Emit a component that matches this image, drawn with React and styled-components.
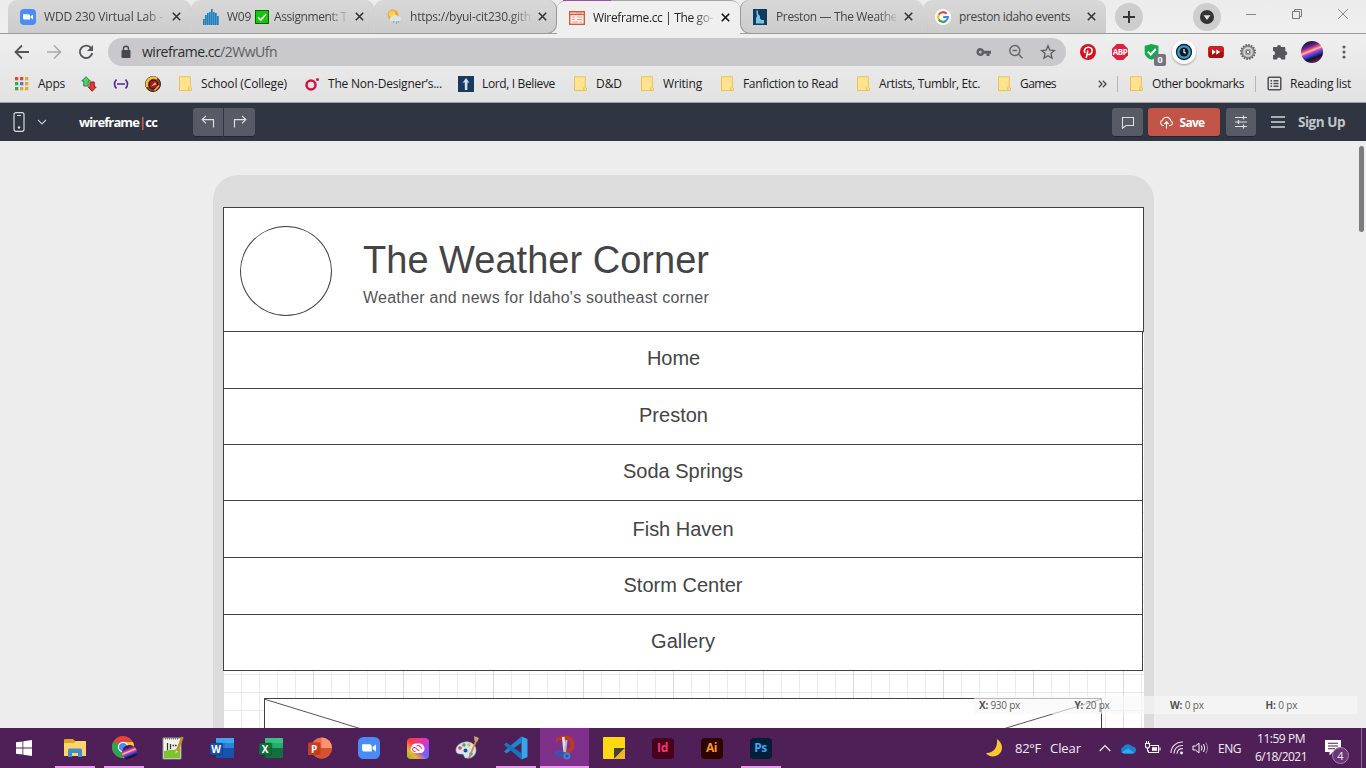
import React, { useLayoutEffect, useRef, useState } from "react";
import styled, { createGlobalStyle, css } from "styled-components";

const UI = `"Open Sans", "Noto Sans", sans-serif`;

const Global = createGlobalStyle`
  * { box-sizing: border-box; }
  body { margin: 0; overflow: hidden; font-family: ${UI}; }
  svg { display: block; flex: none; }
`;

const Screen = styled.div`
  width: 1366px;
  height: 768px;
  display: flex;
  flex-direction: column;
  overflow: hidden;
`;

/* Text tracked so that it fills a given width */
const Tracked = styled.span`
  display: inline-block;
  white-space: pre;
  flex: none;
  justify-self: start;
`;
function Fit({ w, children }) {
  const ref = useRef(null);
  const [spacing, setSpacing] = useState(0);
  useLayoutEffect(() => {
    const el = ref.current;
    const n = el.textContent.length;
    setSpacing((w - el.getBoundingClientRect().width) / n);
  }, [w]);
  return (
    <Tracked ref={ref} style={{ letterSpacing: spacing + "px" }}>
      {children}
    </Tracked>
  );
}

/* ---------- tab strip ---------- */
const TabStrip = styled.div`
  height: 34px;
  flex: none;
  display: flex;
  padding-left: 8px;
  background: linear-gradient(#ececec, #efefef);
  box-shadow: inset 0 -1px #9c9c9c;
`;
const Tab = styled.div`
  flex: 0 0 183px;
  height: ${(p) => (p.$active ? 34 : 33)}px;
  display: flex;
  align-items: center;
  padding-left: 12px;
  position: relative;
  font-size: 12px;
  color: ${(p) => (p.$active ? "#222" : "#444")};
  border-radius: 9px 9px 0 0;
  background: linear-gradient(#d8d8d8, #cccccc);
  ${(p) => p.$divider && css`box-shadow: inset -1px 0 #d2d2d2;
    &::after { content: ""; position: absolute; right: -1px; top: 8px; width: 1px; height: 19px; background: #777; }`}
  ${(p) => p.$side === "before" && css`border-radius: 9px 9px 10px 0; border-right: 1px solid #999; border-bottom: 1px solid #999; height: 34px;`}
  ${(p) => p.$side === "after" && css`border-radius: 9px 9px 0 10px; border-left: 1px solid #999; border-bottom: 1px solid #999; height: 34px; padding-left: 11px;`}
  ${(p) => p.$active && css`background: #efefef; border-top: 1px solid #a5a5a5; border-radius: 9px 9px 0 0;
    &::before { content: ""; position: absolute; left: 6px; top: -1px; width: 48px; height: 1px; background: #9a4fa0; }`}
`;
const TabIcon = styled.div`
  flex: 0 0 24px;
  display: flex;
`;
const TabText = styled.div`
  flex: 0 0 120px;
  overflow: hidden;
  white-space: nowrap;
  line-height: 20px;
  ${(p) => p.$fade && css`mask-image: linear-gradient(90deg, #000 84%, transparent 103%);`}
`;
const TabClose = styled.div`
  flex: 0 0 24px;
  display: flex;
  justify-content: center;
`;
const RoundButton = styled.div`
  width: 28px;
  height: 28px;
  margin: 3px 0 0 ${(p) => p.$gap}px;
  border-radius: 50%;
  background: #cdcdcd;
  display: flex;
  align-items: center;
  justify-content: center;
`;
const WindowButtons = styled.div`
  display: flex;
  gap: 34px;
  margin: 8px 0 0 24px;
  height: 12px;
`;

/* ---------- toolbar ---------- */
const Toolbar = styled.div`
  height: 36px;
  flex: none;
  display: flex;
  align-items: center;
  padding-left: 6px;
  background: linear-gradient(#efefef, #e8e8e8);
`;
const Slot = styled.div`
  position: relative;
  flex: 0 0 32px;
  height: 32px;
  display: flex;
  align-items: center;
  justify-content: center;
`;
const Omnibox = styled.div`
  flex: 0 0 958px;
  height: 28px;
  margin: 0 6px 0 6px;
  border-radius: 14px;
  background: #c9c9cb;
  display: flex;
  align-items: center;
  padding: 0 2px 0 12px;
  font-size: 14px;
  color: #5c5d60;
  b { font-weight: 400; color: #2b2c2e; }
`;
const Address = styled.div`
  flex: 1;
  padding-left: 10px;
  line-height: 20px;
`;
const CountBadge = styled.div`
  position: absolute;
  left: 18px;
  top: 18px;
  width: 12px;
  height: 12px;
  border-radius: 2px;
  background: #74727f;
  color: #fff;
  font: 700 9px/12px ${UI};
  text-align: center;
`;
const WhiteDisc = styled.div`
  width: 24px;
  height: 24px;
  border-radius: 50%;
  background: #fff;
  box-shadow: 0 1px 2px #0005;
  display: flex;
  align-items: center;
  justify-content: center;
`;
const Avatar = styled.div`
  width: ${(p) => p.$size}px;
  height: ${(p) => p.$size}px;
  border-radius: 50%;
  background: linear-gradient(158deg, #2a1838 0 16%, #5a1ea0 28%, #e04a6a 38%, #ffc9a0 45%, #d838c8 51%, #3048d8 60%, #12102c 72%, #7a2058 88%, #c03070 100%);
`;

/* ---------- bookmarks ---------- */
const Bookmarks = styled.div`
  height: 33px;
  flex: none;
  display: flex;
  align-items: center;
  padding: 0 0 5px 14px;
  background: linear-gradient(#e8e8e8, #e2e2e2);
  border-bottom: 1px solid #a2a2a4;
  font-size: 12px;
  color: #1c1c1c;
`;
const Bookmark = styled.div`
  flex: 0 0 ${(p) => p.$w}px;
  display: flex;
  align-items: center;
  gap: 8px;
`;
const BookmarkIcon = styled.div`
  width: 16px;
  height: 16px;
  display: flex;
  align-items: center;
  justify-content: center;
`;
const Divider = styled.div`
  width: 1px;
  height: 16px;
  background: #b5b5b5;
  margin: 0 10px;
`;
const More = styled.div`
  flex: 0 0 51px;
  display: flex;
  justify-content: flex-end;
`;

/* ---------- editor bar ---------- */
const EditorBar = styled.div`
  height: 38px;
  flex: none;
  display: flex;
  align-items: center;
  background: #2f3541;
  color: #d3d6da;
  padding-left: 13px;
`;
const Brand = styled.div`
  flex: 0 0 114px;
  font-size: 13px;
  font-weight: 700;
  color: #fff;
  i { font-style: normal; color: #d85c4c; }
`;
const BarButton = styled.div`
  width: ${(p) => p.$w || 30}px;
  height: 28px;
  margin-left: ${(p) => p.$gap || 0}px;
  padding-right: ${(p) => (p.$primary ? 5 : 0)}px;
  border-radius: ${(p) => p.$radius || "3px"};
  background: ${(p) => (p.$primary ? "#c25548" : "#565b65")};
  box-shadow: 0 1px #23272f;
  display: flex;
  align-items: center;
  justify-content: center;
  gap: 6px;
  color: ${(p) => (p.$primary ? "#fff" : "#dddfe2")};
  font-size: 12px;
  font-weight: 700;
`;
const BarSpace = styled.div`
  width: ${(p) => p.$w}px;
`;
const SignUp = styled.div`
  padding-left: 13px;
  font-size: 13.5px;
  font-weight: 700;
  color: #c2c5c9;
`;

/* ---------- canvas ---------- */
const Canvas = styled.div`
  position: relative;
  height: 587px;
  flex: none;
  background: #ededed;
  padding: 34px 0 0 213px;
  overflow: hidden;
`;
const Device = styled.div`
  width: 941px;
  height: 620px;
  background: #dcdcdc;
  border-radius: 25px 25px 0 0;
  padding: 32px 10px 0;
`;
const Sheet = styled.div`
  width: 921px;
  height: 600px;
  background-color: #fff;
  background-image:
    linear-gradient(90deg, #dadada 1px, transparent 1px),
    linear-gradient(90deg, #ebebeb 1px, transparent 1px),
    linear-gradient(#ebebeb 1px, transparent 1px);
  background-size: 90px 90px, 18px 18px, 18px 18px;
  background-position: 0 0, 0 0, 0 17px;
`;
const SiteHeader = styled.div`
  height: 125px;
  border: 1px solid #414143;
  background: #fff;
  display: flex;
  padding: 18px 0 0 16px;
  font-family: "Liberation Sans", Arial, sans-serif;
  color: #444446;
`;
const Logo = styled.div`
  width: 92px;
  height: 90px;
  border: 1px solid #414143;
  border-radius: 50%;
`;
const Titles = styled.div`
  margin-left: 31px;
  padding-top: 12px;
`;
const Title = styled.div`
  font-size: 38px;
  line-height: 44px;
`;
const Subtitle = styled.div`
  margin-top: 7px;
  font-size: 16px;
  line-height: 18px;
  color: #555557;
`;
const Nav = styled.div`
  width: 920px;
  margin-top: -1px;
  border: solid #414143;
  border-width: 1px 1px 0;
  background: #fff;
  font: 20px "Liberation Sans", Arial, sans-serif;
  color: #444446;
`;
const NavRow = styled.div`
  height: ${(p) => p.$h}px;
  border-bottom: 1px solid #414143;
  display: flex;
  justify-content: center;
  padding-top: ${(p) => p.$pad}px;
  padding-right: ${(p) => p.$inset || 0}px;
  line-height: 22px;
`;
const Picture = styled.div`
  width: 838px;
  height: 60px;
  margin: 27px 0 0 41px;
  background: #fff;
  border: 1px solid #414143;
  svg { margin: 0 -1px; }
`;
const Coordinates = styled.div`
  position: absolute;
  left: 974px;
  top: 555px;
  width: 383px;
  height: 18px;
  padding-left: 5px;
  display: grid;
  grid-template-columns: repeat(4, 95.5px);
  background: #f8f8f8a6;
  font-size: 10px;
  line-height: 18px;
  color: #606060;
  b { color: #505050; }
`;
const Scrollbar = styled.div`
  position: absolute;
  right: 2px;
  top: 5px;
  width: 5px;
  height: 86px;
  border-radius: 3px;
  background: #7a7c80;
`;

/* ---------- taskbar ---------- */
const Taskbar = styled.div`
  height: 40px;
  flex: none;
  display: flex;
  align-items: center;
  background: #4f1f57;
  color: #f3edf4;
  font-size: 12px;
`;
const Start = styled.div`
  flex: 0 0 50px;
  display: flex;
  padding-left: 16px;
`;
const TaskButton = styled.div`
  position: relative;
  flex: 0 0 49px;
  height: 40px;
  display: flex;
  align-items: center;
  justify-content: center;
  ${(p) => p.$active && css`background: #7f308a;`}
  ${(p) => p.$open && css`&::after {
    content: ""; position: absolute; bottom: 0; height: 2px; background: #e79ae9;
    width: ${p.$active ? 49 : 40}px;
  }`}
`;
const Adobe = styled.div`
  width: 22px;
  height: 21px;
  border-radius: 4px;
  background: ${(p) => p.$bg};
  color: ${(p) => p.$fg};
  font: 700 12px/20px ${UI};
  text-align: center;
  letter-spacing: -0.4px;
`;
const Tray = styled.div`
  display: flex;
  align-items: center;
  margin-left: 200px;
`;
const TrayCell = styled.div`
  flex: 0 0 ${(p) => p.$w}px;
  font-size: ${(p) => p.$size || 12}px;
  display: flex;
`;
const Clock = styled.div`
  flex: 0 0 52px;
  display: flex;
  flex-direction: column;
  align-items: center;
  line-height: 18px;
`;
const Notices = styled.div`
  position: relative;
  width: 24px;
  height: 24px;
  margin: 8px 0 0 18px;
`;
const NoticeCount = styled.div`
  position: absolute;
  left: 7px;
  top: 7px;
  width: 17px;
  height: 17px;
  border-radius: 50%;
  border: 1px solid #a982b0;
  background: #6c3677;
  font-size: 11px;
  line-height: 15px;
  text-align: center;
`;
const ShowDesktop = styled.div`
  width: 5px;
  height: 40px;
  margin-left: auto;
  border-left: 1px solid #88698d;
`;

/* ---------- drawings ---------- */
const Svg = ({ s = 16, w, h, box, children, ...rest }) => (
  <svg width={w || s} height={h || s} viewBox={box || `0 0 ${w || s} ${h || s}`} fill="none" {...rest}>
    {children}
  </svg>
);
const ZoomLogo = ({ s = 16 }) => (
  <Svg s={s} box="0 0 16 16">
    <rect width="16" height="16" rx="4" fill="#4a8cf7" />
    <path d="M3 5.3h5.3c1 0 1.7.7 1.7 1.7v3.6H4.7C3.700 10.600 3 9.900 3 8.900z M10.600 7.300l2.500-1.900v5.200l-2.500-1.900z" fill="#fff" />
  </Svg>
);
const Bars = () => (
  <Svg s={16}>
    {[[0, 10], [2, 6], [4, 4], [6, 3], [8, 0], [10, 3], [12, 4], [14, 7]].map(([x, y]) => (
      <rect key={x} x={x} y={y} width="1.700" height={16 - y} fill="#1d7fc0" />
    ))}
  </Svg>
);
const SunCloud = () => (
  <Svg s={16}>
    <circle cx="7" cy="6" r="5.500" fill="#f5a623" />
    <circle cx="6" cy="5" r="3.300" fill="#fcd05a" />
    <path d="M5 12a2.500 2.500 0 0 1 1-4.500 3.500 3.500 0 0 1 6 0 2.500 2.500 0 0 1 2 4.500z" fill="#dde3ea" />
    <path d="M8 12l-1 2M11 12l-1 3M13 12l-1 2" stroke="#8ba5b8" />
  </Svg>
);
const WireIcon = () => (
  <Svg s={16}>
    <rect x=".7" y="1.700" width="14.600" height="12.600" stroke="#d9593a" strokeWidth="1.400" fill="#fdf3ee" />
    <path d="M1 4.500h14" stroke="#d9593a" strokeWidth="1.200" />
    <path d="M2.500 3h1M4.500 3h1M6.500 3h7" stroke="#d9593a" strokeWidth=".8" />
    <path d="M3 7h3M3 9.500h3M3 12h6M8 7h5M8 9.500h5M10.500 12H13" stroke="#eba088" strokeWidth="1.100" />
  </Svg>
);
const Idaho = () => (
  <Svg s={16}>
    <rect x="1" width="14" height="16" fill="#123c5d" />
    <path d="M4.500 1.500H6V5l2 2v2.500l1.500 1.500H12v3.500H4V9l1-2-.5-2z" fill="#72c6e6" />
  </Svg>
);
const GoogleG = () => (
  <Svg s={16}>
    <circle cx="8" cy="8" r="8" fill="#fff" />
    <g strokeWidth="2.100">
      <path d="M11.600 4.700A4.900 4.900 0 0 0 3.700 5.700" stroke="#ea4335" />
      <path d="M3.700 5.700a4.900 4.900 0 0 0 0 4.700" stroke="#fbbc05" />
      <path d="M3.700 10.400a4.900 4.900 0 0 0 7.500 1.200" stroke="#34a853" />
      <path d="M11.200 11.600A4.900 4.900 0 0 0 12.900 8H8.200" stroke="#4285f4" />
    </g>
  </Svg>
);
const Close = ({ c = "#333" }) => (
  <Svg s={9}>
    <path d="M.8.8l7.400 7.400M8.200.8L.8 8.200" stroke={c} strokeWidth="1.600" />
  </Svg>
);
const CheckBox = styled.span`
  display: inline-flex;
  vertical-align: -3px;
  margin: 0 5px 0 4px;
`;
const Folder = () => (
  <Svg w={13} h={15}>
    <path d="M.5.8h10.800v10l1.200 1v2.700H.5z" fill="#ffe38e" stroke="#e8c255" />
    <path d="M9.900 14.200v-2.600l1-1.200" stroke="#e3b83c" />
  </Svg>
);

const tabs = [
  { icon: <ZoomLogo />, text: "WDD 230 Virtual Lab -", w: 119, fade: true, divider: true },
  { icon: <Bars />, check: true, fade: true, divider: true },
  { icon: <SunCloud />, text: "https://byui-cit230.gith", w: 121, fade: true, side: "before" },
  { icon: <WireIcon />, text: "Wireframe.cc | The go-", w: 120, fade: true, active: true },
  { icon: <Idaho />, text: "Preston — The Weathe", w: 121, fade: true, side: "after", divider: true },
  { icon: <GoogleG />, text: "preston idaho events", w: 111 },
];

const folders = [
  ["D&D", 26, 67],
  ["Writing", 39, 80],
  ["Fanfiction to Read", 95, 136],
  ["Artists, Tumblr, Etc.", 101, 141],
  ["Games", 36, 60],
];

/* label, text width, row height, top padding, right inset */
const navRows = [
  ["Home", 53, 57, 15, 19],
  ["Preston", 69, 56, 15, 19],
  ["Soda Springs", 120, 56, 15, 0],
  ["Fish Haven", 101, 57, 17, 0],
  ["Storm Center", 119, 57, 16, 0],
  ["Gallery", 64, 56, 15, 0],
];

const Office = ({ letter, dark, mid, light }) => (
  <Svg w={24} h={22}>
    <path d="M6 1h18v5H6z" fill={light} />
    <path d="M6 6h18v5H6z" fill={mid} />
    <path d="M6 11h18v5H6z" fill={dark} />
    <path d="M6 16h18v4a1 1 0 0 1-1 1H7a1 1 0 0 1-1-1z" fill={dark} />
    <path d="M15 6h9v5h-9z" fill={light} opacity=".3" />
    <rect y="6" width="12.500" height="12" rx="1" fill={dark} stroke="#0003" />
    <text x="6.200" y="15.700" fontSize="10" fontWeight="700" fill="#fff" textAnchor="middle">{letter}</text>
  </Svg>
);

const apps = [
  { open: true, icon: (
    <Svg w={22} h={20}>
      <path d="M0 2a1 1 0 0 1 1-1h8l2 2h10a1 1 0 0 1 1 1v13H0z" fill="#e2a526" />
      <path d="M0 5h10l2-2h9a1 1 0 0 1 1 1v14H0z" fill="#fbd46c" />
      <path d="M4 19v-7a1.500 1.500 0 0 1 1.500-1.500h11A1.500 1.500 0 0 1 18 12v7h-4v-4H8v4z" fill="#3e8fd0" />
    </Svg>) },
  { open: true, icon: (
    <Svg w={26} h={26}>
      <circle cx="12" cy="12" r="11" fill="#e2453b" />
      <path d="M12 12L2.500 6.500a11 11 0 0 0 9.500 16.500l5-8.500z" fill="#2fa450" />
      <path d="M12 7h10a11 11 0 0 1-10 16l5-8.500z" fill="#f8c62b" />
      <circle cx="12" cy="12" r="5.200" fill="#fff" />
      <circle cx="12" cy="12" r="4" fill="#4c8af0" />
      <foreignObject x="11" y="10" width="15" height="15"><Avatar $size={15} /></foreignObject>
    </Svg>) },
  { icon: (
    <Svg w={22} h={24}>
      <path d="M1 2h18v21H1z" fill="#eef2e8" stroke="#8c9a86" />
      <path d="M2 15c5-2 10 0 16-3v10H2z" fill="#7cc52e" />
      <path d="M3 2.500h14" stroke="#777" strokeWidth="2" strokeDasharray="1 1" />
      <path d="M5.500 7v7M8.500 8v5" stroke="#333" strokeWidth="1.200" /><path d="M10.500 9.500h1.500M13 9.500h1.500" stroke="#333" strokeWidth="1.400" />
      <path d="M20.500 1L15 15" stroke="#c28e2a" strokeWidth="2.600" />
      <path d="M14 14.500l-.8 3.500 2.800-2.700" fill="#f4deb0" />
    </Svg>) },
  { icon: <Office letter="W" dark="#1853b2" mid="#2472ce" light="#41a5ee" /> },
  { icon: <Office letter="X" dark="#10713c" mid="#21a366" light="#33c481" /> },
  { icon: (
    <Svg w={24} h={22}>
      <circle cx="13.500" cy="11" r="10.500" fill="#ed6c47" />
      <path d="M13.500.5A10.500 10.500 0 0 1 24 11H13.500z" fill="#ff9270" />
      <path d="M3 11h21a10.500 10.500 0 0 1-21 0z" fill="#d35230" />
      <rect y="5.500" width="12.500" height="12.500" rx="1" fill="#c43e1c" />
      <text x="6.200" y="15.500" fontSize="10" fontWeight="700" fill="#fff" textAnchor="middle">P</text>
    </Svg>) },
  { icon: <ZoomLogo s={22} /> },
  { icon: (
    <Svg w={22} h={21}>
      <defs>
        <linearGradient id="ccA" x1="0" y1="0" x2="1" y2="1">
          <stop offset="0" stopColor="#ff3a20" /><stop offset=".35" stopColor="#f5368c" />
          <stop offset=".65" stopColor="#b63cf0" /><stop offset="1" stopColor="#3388f5" />
        </linearGradient>
        <linearGradient id="ccB" x1="0" y1="1" x2=".7" y2=".3">
          <stop offset="0" stopColor="#63cc3c" /><stop offset=".35" stopColor="#f5b02b" /><stop offset=".7" stopColor="#f5b02b" stopOpacity="0" />
        </linearGradient>
      </defs>
      <rect width="22" height="21" rx="4" fill="url(#ccA)" />
      <rect width="22" height="21" rx="4" fill="url(#ccB)" />
      <path d="M14.500 15H7.500a3.800 3.800 0 0 1-3-6.300A4.600 4.600 0 0 1 9 5.500h3a5 5 0 0 1 5.500 4.800A4.600 4.600 0 0 1 14.500 15z" fill="#fff" />
      <path d="M12.500 12.500c-1 0-1.600-.4-2.400-1.200L8.600 9.900a1.900 1.900 0 1 0 0 3.200M9.500 8.200c1.300-1.200 3-.6 4 .8l1.300 1.600" stroke="#e8386a" strokeWidth="1.100" />
    </Svg>) },
  { icon: (
    <Svg w={24} h={24}>
      <path d="M10 6c6-1 11 3 11 8s-4 9-10 8c-3-.5-1-4-4-4s-6 0-6-4 4-7.300 9-8z" fill="#d5e6f2" stroke="#9fb9cb" strokeWidth=".6" />
      <circle cx="5" cy="12" r="1.800" fill="#e2483d" /><circle cx="9" cy="9" r="1.800" fill="#4db250" />
      <circle cx="14" cy="9" r="1.700" fill="#efb332" /><circle cx="10.500" cy="14.500" r="2" fill="#224d92" />
      <circle cx="16" cy="18" r="1.700" fill="#347ed0" />
      <path d="M21.500 4L14 22" stroke="#d38a3a" strokeWidth="1.900" />
      <path d="M19 0l5 2-2 4-2.500-1z" fill="#caa072" />
    </Svg>) },
  { open: true, icon: (
    <Svg w={24} h={24}>
      <path d="M17.500.5l6 2.500v18l-6 2.500z" fill="#35a6ed" />
      <path d="M0 15.200L17.500.5v6.300L2.300 17.500z" fill="#1f86cd" />
      <path d="M2.300 6.500l15.200 10.700v6.300L0 8.800z" fill="#1676bd" />
    </Svg>) },
  { open: true, active: true, icon: (
    <Svg w={22} h={26}>
      <path d="M5 4.500C10 .5 19 2.500 18.500 10c0 4-3 6.500-6.500 6.500" stroke="#bd3b20" strokeWidth="4" />
      <path d="M2 7V2.500h6z" fill="#bd3b20" />
      <path d="M9.200 2l1.600 15" stroke="#e2e4e8" strokeWidth="2.600" />
      <path d="M12.500 5l-1.700 12" stroke="#b9bdc4" strokeWidth="2.200" />
      <circle cx="12.800" cy="21" r="2.600" stroke="#2f86d5" strokeWidth="2" />
      <ellipse cx="5.500" cy="18.500" rx="3.500" ry="2" stroke="#2360ae" strokeWidth="2" />
    </Svg>) },
  { icon: (
    <Svg w={22} h={22}>
      <rect width="22" height="22" rx="1" fill="#fbd812" />
      <path d="M11 11h11L11 22z" fill="#40403c" />
      <path d="M22 11v11H11z" fill="#f2b51d" />
    </Svg>) },
  { icon: <Adobe $bg="#48021c" $fg="#f5386e">Id</Adobe> },
  { icon: <Adobe $bg="#2f0502" $fg="#f89a1a">Ai</Adobe> },
  { open: true, icon: <Adobe $bg="#021e38" $fg="#39a8f4">Ps</Adobe> },
];

export default function App() {
  const grey = "#55565a";
  return (
    <Screen>
      <Global />
      <TabStrip>
        {tabs.map((t, i) => (
          <Tab key={i} $active={t.active} $side={t.side} $divider={t.divider}>
            <TabIcon>{t.icon}</TabIcon>
            <TabText $fade={t.fade}>
              {t.check ? (
                <>
                  <Fit w={24}>W09</Fit>
                  <CheckBox>
                    <Svg s={14}>
                      <rect x=".5" y=".5" width="13" height="13" fill="#16c60c" stroke="#0b5f0a" />
                      <path d="M3 7.300l2.800 2.800L11 4.300" stroke="#fff" strokeWidth="1.600" />
                    </Svg>
                  </CheckBox>
                  <Fit w={73}>Assignment: T</Fit>
                </>
              ) : <Fit w={t.w}>{t.text}</Fit>}
            </TabText>
            <TabClose><Close c={t.active ? "#111" : "#333"} /></TabClose>
          </Tab>
        ))}
        <RoundButton $gap={9}>
          <Svg s={12}><path d="M6 0v12M0 6h12" stroke="#333" strokeWidth="2" /></Svg>
        </RoundButton>
        <RoundButton $gap={50}>
          <Svg s={14}><circle cx="7" cy="7" r="7" fill="#333" /><path d="M3.500 5.200h7L7 10z" fill="#e0e0e0" /></Svg>
        </RoundButton>
        <WindowButtons>
          <Svg s={12}><path d="M1 6.500h10" stroke="#888" /></Svg>
          <Svg s={12}><path d="M1.500 3.500h7v7h-7zM3.500 3.500v-2h7v7h-2" stroke="#777" /></Svg>
          <Svg s={12}><path d="M1 1l10 10M11 1L1 11" stroke="#888" /></Svg>
        </WindowButtons>
      </TabStrip>

      <Toolbar>
        <Slot><Svg s={16}><path d="M15 8H2M8 1.500L1.500 8 8 14.500" stroke={grey} strokeWidth="1.800" /></Svg></Slot>
        <Slot><Svg s={16}><path d="M1 8h13M8 1.500L14.500 8 8 14.500" stroke="#aaa" strokeWidth="1.600" /></Svg></Slot>
        <Slot><Svg s={16}><path d="M13.200 4.300A6.200 6.200 0 1 0 14.200 9" stroke={grey} strokeWidth="1.900" /><path d="M15 1v6H9z" fill={grey} /></Svg></Slot>
        <Omnibox>
          <Svg w={12} h={14}>
            <rect x="1.500" y="5" width="9" height="8" rx="1" fill="#47484b" />
            <path d="M3.500 5V3.700a2.500 2.500 0 0 1 5 0V5" stroke="#47484b" strokeWidth="1.400" />
          </Svg>
          <Address><Fit w={135}><b>wireframe.cc</b>/2WwUfn</Fit></Address>
          <Slot>
            <Svg w={16} h={10}><path fillRule="evenodd" fill="#5f6064" d="M4.300 1a4 4 0 0 1 3.800 2.700H15v3h-1.500V9h-3V6.700H8.100A4 4 0 1 1 4.300 1zm0 2.700a1.400 1.400 0 1 0 0 2.800 1.400 1.400 0 0 0 0-2.800z" /></Svg>
          </Slot>
          <Slot>
            <Svg s={16}><circle cx="6.800" cy="6.500" r="5" stroke="#66676a" strokeWidth="1.500" /><path d="M4.500 6.500H9M10.500 10.200l4 4" stroke="#66676a" strokeWidth="1.500" /></Svg>
          </Slot>
          <Slot>
            <Svg s={16}><path d="M8 1.700l1.800 4.400 4.700.4-3.600 3 1.100 4.700L8 11.700l-4 2.500 1.100-4.700-3.600-3 4.700-.4z" stroke="#5a5b5e" strokeWidth="1.300" /></Svg>
          </Slot>
        </Omnibox>
        <Slot>
          <Svg s={16}><circle cx="8" cy="8" r="8" fill="#d5131e" /><path d="M7.900 6.500L6.200 14M5 9.200C3.200 6 5.500 3.200 8.500 3.200c3.300 0 4.300 2.800 3.300 5.200-1 2.500-3.800 2.700-4.600 1.200" stroke="#fff" strokeWidth="1.600" /></Svg>
        </Slot>
        <Slot>
          <Svg s={16}><path d="M4.700 0h6.600L16 4.700v6.600L11.300 16H4.700L0 11.300V4.700z" fill="#e21f3f" /><text x="8" y="11" fontSize="8" fontWeight="700" textAnchor="middle" fill="#fff" letterSpacing="-.4">ABP</text></Svg>
        </Slot>
        <Slot>
          <Svg s={16}><path d="M.7 1.700L7.500 0l7 1.700v6.500c0 4-3.500 6.300-7 7.500-3.500-1.200-6.800-3.500-6.800-7.500z" fill="#18a84a" /><path d="M3.800 7.500l3 3 5-5.500" stroke="#fff" strokeWidth="1.900" /></Svg>
          <CountBadge>0</CountBadge>
        </Slot>
        <Slot>
          <WhiteDisc>
            <Svg s={18}><circle cx="9" cy="9" r="7.500" fill="#3a9dd6" stroke="#16242f" strokeWidth="1.300" /><circle cx="9" cy="9" r="4.500" fill="#10161c" /><path d="M9 6v3.300l1.800 1" stroke="#fff" strokeWidth="1.200" /></Svg>
          </WhiteDisc>
        </Slot>
        <Slot>
          <Svg w={16} h={14}><rect y="1" width="16" height="12" rx="3" fill="#d01d21" /><path d="M1 7h14v4a2 2 0 0 1-2 2H3a2 2 0 0 1-2-2z" fill="#a50f14" /><path d="M4 4.300L7.800 7 4 9.700zM8.300 4.300L12.200 7 8.300 9.700z" fill="#fff" /></Svg>
        </Slot>
        <Slot>
          <Svg s={16}>
            <circle cx="8" cy="8" r="7.100" stroke="#666" strokeWidth="1.700" strokeDasharray="1.600 1.190" />
            <circle cx="8" cy="8" r="6.300" fill="#a0a0a0" stroke="#555" strokeWidth=".8" />
            <circle cx="8" cy="8" r="4" stroke="#ddd" strokeWidth="1.300" />
            <circle cx="8" cy="8" r="1.700" fill="#e8e8e8" stroke="#555" strokeWidth=".7" />
          </Svg>
        </Slot>
        <Slot>
          <Svg s={16}><path fill="#55575b" d="M5 3a2 2 0 1 1 4 0h3.300c.6 0 1 .4 1 1v3.200a2 2 0 1 1 0 4V14.500c0 .6-.4 1-1 1H9.200a2.100 2.100 0 1 0-4.200 0H2c-.6 0-1-.4-1-1v-3.200a2.100 2.100 0 1 0 0-4.200V4c0-.6.4-1 1-1z" /></Svg>
        </Slot>
        <Slot><Avatar $size={22} /></Slot>
        <Slot>
          <Svg w={4} h={14}><circle cx="2" cy="2" r="1.500" fill={grey} /><circle cx="2" cy="7" r="1.500" fill={grey} /><circle cx="2" cy="12" r="1.500" fill={grey} /></Svg>
        </Slot>
      </Toolbar>

      <Bookmarks>
        <Bookmark $w={67}>
          <BookmarkIcon>
            <Svg s={14}>
              {["#e04a3c", "#e04a3c", "#e9a43a", "#3fa45c", "#3a7fe0", "#e9a43a", "#3fa45c", "#e9a43a", "#e9a43a"].map((c, i) => (
                <rect key={i} x={(i % 3) * 5} y={Math.floor(i / 3) * 5} width="3.300" height="3.300" fill={c} />
              ))}
            </Svg>
          </BookmarkIcon>
          <Fit w={27}>Apps</Fit>
        </Bookmark>
        <Bookmark $w={32}>
          <Svg s={16}>
            <path d="M5 .7L9.300 5H7.200v5H2.800V5H.7z" fill="#4fd36a" stroke="#26843c" />
            <path d="M11.200 15.300L7.200 11H9V6h4.300v5h1.900z" fill="#e23b34" stroke="#9a1d1b" />
          </Svg>
        </Bookmark>
        <Bookmark $w={32}>
          <Svg s={16}><path d="M3.500 3.500q-4 4.500 0 9M12.500 3.500q4 4.500 0 9M4 8h8" stroke="#5b2499" strokeWidth="1.600" /></Svg>
        </Bookmark>
        <Bookmark $w={32}>
          <Svg s={16}>
            <circle cx="8" cy="8" r="7.500" fill="#8a4a14" stroke="#3c1c0c" />
            <path d="M2.500 11A6.500 6.500 0 0 1 12 2.800" stroke="#f5c23c" strokeWidth="2.400" />
            <circle cx="8.500" cy="8.500" r="4.500" fill="#a01a1c" stroke="#27100c" />
            <path d="M6 10.500l4-4.500 1.500 2.500z" fill="#f0a09a" />
            <path d="M14 9.500l-4.500 5" stroke="#f0a82c" strokeWidth="1.600" />
          </Svg>
        </Bookmark>
        <Bookmark $w={127}>
          <BookmarkIcon><Folder /></BookmarkIcon><Fit w={86}>School (College)</Fit>
        </Bookmark>
        <Bookmark $w={154}>
          <BookmarkIcon><Svg s={16}><circle cx="7" cy="9" r="4.500" stroke="#cc1640" strokeWidth="2.500" /><circle cx="13.500" cy="3.500" r="1.500" fill="#cc1640" /></Svg></BookmarkIcon>
          <Fit w={114}>The Non-Designer’s...</Fit>
        </Bookmark>
        <Bookmark $w={114}>
          <BookmarkIcon><Svg s={16}><rect width="16" height="16" fill="#173a5e" /><path d="M8 2l3.500 5-2-.8L9.300 14H6.900L6.700 6.200l-2.200.8z" fill="#cfe0ea" /></Svg></BookmarkIcon>
          <Fit w={73}>Lord, I Believe</Fit>
        </Bookmark>
        {folders.map(([label, tw, w]) => (
          <Bookmark key={label} $w={w}>
            <BookmarkIcon><Folder /></BookmarkIcon><Fit w={tw}>{label}</Fit>
          </Bookmark>
        ))}
        <More><Svg w={9} h={8}><path d="M.8.8L4 4 .8 7.200M4.800.8L8 4 4.800 7.200" stroke="#444" strokeWidth="1.300" /></Svg></More>
        <Divider />
        <Bookmark $w={117}>
          <BookmarkIcon><Folder /></BookmarkIcon><Fit w={92}>Other bookmarks</Fit>
        </Bookmark>
        <Divider />
        <Bookmark $w={86}>
          <BookmarkIcon>
            <Svg s={15}><rect x="1.200" y="1.200" width="12.600" height="12.600" rx="1" stroke="#505154" strokeWidth="1.500" /><path d="M3.500 4.700h1.600M3.500 7.500h1.600M3.500 10.300h1.600M6.500 4.700h5M6.500 7.500h5M6.500 10.300h5" stroke="#505154" strokeWidth="1.400" /></Svg>
          </BookmarkIcon>
          <Fit w={61}>Reading list</Fit>
        </Bookmark>
      </Bookmarks>

      <EditorBar>
        <Svg w={12} h={20}><rect x="1" y=".7" width="10" height="18.600" rx="2" stroke="#d8dadd" strokeWidth="1.200" /><path d="M4 3.500h4" stroke="#d8dadd" /><circle cx="6" cy="15.500" r="1.200" fill="#d8dadd" /></Svg>
        <BarSpace $w={12} />
        <Svg w={10} h={6}><path d="M1 .8l4 4 4-4" stroke="#c9ccd0" strokeWidth="1.200" /></Svg>
        <BarSpace $w={32} />
        <Brand><Fit w={78}>wireframe<i>|</i>cc</Fit></Brand>
        <BarButton $radius="3px 0 0 3px">
          <Svg w={14} h={14}><path d="M5 .8L1.200 4.600 5 8.400M1.200 4.600h11.300V12.500" stroke="currentColor" strokeWidth="1.200" /></Svg>
        </BarButton>
        <BarButton $gap={1} $w={31} $radius="0 3px 3px 0">
          <Svg w={14} h={14}><path d="M9 .8l3.800 3.800L9 8.400M12.800 4.600H1.500V12.500" stroke="currentColor" strokeWidth="1.200" /></Svg>
        </BarButton>
        <BarSpace $w={857} />
        <BarButton $w={31}>
          <Svg w={14} h={13}><path d="M1.500 1.500h11v8H5l-3.500 2.700z" stroke="currentColor" strokeWidth="1.100" /></Svg>
        </BarButton>
        <BarButton $gap={5} $w={72} $primary>
          <Svg w={15} h={13}><path d="M5 9.500H3.700A2.900 2.900 0 0 1 3.600 4a4.200 4.200 0 0 1 8.100.7 2.500 2.500 0 0 1-.3 4.800H10M7.500 12.500V6M5.300 8l2.200-2.200L9.700 8" stroke="currentColor" strokeWidth="1.100" /></Svg>
          <Fit w={25}>Save</Fit>
        </BarButton>
        <BarButton $gap={6}>
          <Svg w={14} h={14}><path d="M1 2.500h12M1 7h12M1 11.500h12M9.500.5v4M4.500 5v4M9.500 9.500v4" stroke="currentColor" strokeWidth="1.200" /></Svg>
        </BarButton>
        <BarSpace $w={15} />
        <Svg w={14} h={12}><path d="M0 1h14M0 6h14M0 11h14" stroke="#d3d6da" strokeWidth="1.300" /></Svg>
        <SignUp><Fit w={47}>Sign Up</Fit></SignUp>
      </EditorBar>

      <Canvas>
        <Device>
          <Sheet>
            <SiteHeader>
              <Logo />
              <Titles>
                <Title><Fit w={346}>The Weather Corner</Fit></Title>
                <Subtitle><Fit w={346}>Weather and news for Idaho's southeast corner</Fit></Subtitle>
              </Titles>
            </SiteHeader>
            <Nav>
              {navRows.map(([label, w, h, pad, inset]) => (
                <NavRow key={label} $h={h} $pad={pad} $inset={inset}><Fit w={w}>{label}</Fit></NavRow>
              ))}
            </Nav>
            <Picture>
              <Svg w={838} h={60}><path d="M0 0l195 60M838 0L640 60" stroke="#555" /></Svg>
            </Picture>
          </Sheet>
        </Device>
        <Scrollbar />
        <Coordinates>
          <Fit w={41}><b>X:</b> 930 px</Fit>
          <Fit w={35}><b>Y:</b> 20 px</Fit>
          <Fit w={34}><b>W:</b> 0 px</Fit>
          <Fit w={32}><b>H:</b> 0 px</Fit>
        </Coordinates>
      </Canvas>

      <Taskbar>
        <Start>
          <Svg w={16} h={16}><path d="M0 2.300L6.500 1.400v6.200H0zM7.300 1.300L16 0v7.600H7.300zM0 8.400h6.500v6.200L0 13.700zM7.300 8.400H16V16l-8.700-1.300z" fill="#fff" /></Svg>
        </Start>
        {apps.map((a, i) => (
          <TaskButton key={i} $open={a.open} $active={a.active}>{a.icon}</TaskButton>
        ))}
        <Tray>
          <TrayCell $w={30}>
            <Svg s={20}><path d="M12 1c6 4 7 12 1 16-4 2.500-10 1.500-12-2 7 .5 12-5 11-14z" fill="#fcc72e" /></Svg>
          </TrayCell>
          <TrayCell $w={35} $size={13}><Fit w={26}>82°F</Fit></TrayCell>
          <TrayCell $w={49} $size={13}><Fit w={31}>Clear</Fit></TrayCell>
          <TrayCell $w={21}><Svg w={12} h={8}><path d="M.7 7L6 1.500 11.300 7" stroke="#eee" strokeWidth="1.200" /></Svg></TrayCell>
          <TrayCell $w={24}><Svg w={16} h={11}><path d="M4 10.500a3.500 3.500 0 0 1-.5-6.800A5 5 0 0 1 12 3.500a3.500 3.500 0 0 1 .8 7z" fill="#1682d4" /><path d="M1.500 9.500L8 5.500l6 4-1.500 1H4z" fill="#35aaf0" /></Svg></TrayCell>
          <TrayCell $w={26}>
            <Svg w={17} h={14}><path d="M6.500 4.500h8v7H4.500v-2M16 6.500v3M1.500 2.500h4v2.500a2 2 0 0 1-4 0zM2.500 0v2.500M4.500 0v2.500M3.500 7v3.500" stroke="#fff" strokeWidth="1.100" /><path d="M8 6.200h5v3.600H8z" fill="#fff" /></Svg>
          </TrayCell>
          <TrayCell $w={22}>
            <Svg w={14} h={14}><path d="M1 12A11 11 0 0 1 13 1M4 12.500A8 8 0 0 1 13 4.500M7 12.700a5 5 0 0 1 6-5" stroke="#e9e2ea" strokeWidth="1.100" /><circle cx="11.500" cy="12" r="1.400" fill="#fff" /></Svg>
          </TrayCell>
          <TrayCell $w={26}>
            <Svg w={17} h={14}><path d="M1 5h2.500L7 2v10L3.500 9H1zM9.300 4.500q1.500 2.500 0 5M11.500 3q2.500 4 0 8" stroke="#fff" /><path d="M13.800 1.500q3.400 5.500 0 11" stroke="#a58aaa" /></Svg>
          </TrayCell>
          <TrayCell $w={37}><Fit w={23}>ENG</Fit></TrayCell>
          <Clock><Fit w={48}>11:59 PM</Fit><Fit w={52}>6/18/2021</Fit></Clock>
          <Notices>
            <Svg s={18}><path d="M0 0h16v12H8l-3.500 3.500V12H0z" fill="#fff" /><path d="M3 3.300h10M3 6h10M3 8.700h7" stroke="#4f1f57" strokeWidth="1.100" /></Svg>
            <NoticeCount>4</NoticeCount>
          </Notices>
        </Tray>
        <ShowDesktop />
      </Taskbar>
    </Screen>
  );
}
